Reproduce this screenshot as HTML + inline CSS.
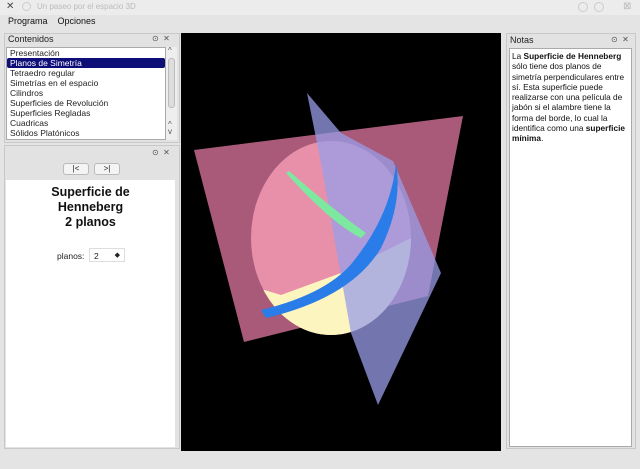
<!DOCTYPE html>
<html><head><meta charset="utf-8"><style>
*{margin:0;padding:0;box-sizing:border-box}
body{width:640px;height:469px;background:#e4e4e4;font-family:"Liberation Sans",sans-serif;font-size:9px;color:#222;position:relative;overflow:hidden}
.abs{position:absolute}
.title{left:0;top:0;width:640px;height:15px;background:#ececec;color:#bbb;font-size:8px}
.menu{top:16px;left:8px;font-size:9px;color:#111}
.panel{border:1px solid #c8c8c8;background:#e2e2e2}
.list{background:#fff;border:1px solid #aaa}
.item{height:10px;line-height:10px;padding-left:3px;font-size:8.5px;color:#222}
.sel{background:#0e0e78;color:#fff;border-radius:2px}
.btn{background:#f4f4f4;border:1px solid #bbb;border-radius:3px;width:26px;height:12px;text-align:center;line-height:10px;font-size:8px}
.ic{font-size:8px;color:#555}
</style></head><body>
<div class="abs title"><span class="abs" style="left:6px;top:1px;color:#444;font-size:10px">✕</span><span class="abs" style="left:22px;top:2px;width:9px;height:9px;border:1px solid #ccc;border-radius:50%"></span><span class="abs" style="left:37px;top:2px">Un paseo por el espacio 3D</span>
<span class="abs" style="left:578px;top:2px;width:10px;height:10px;border:1px solid #ccc;border-radius:50%"></span><span class="abs" style="left:594px;top:2px;width:10px;height:10px;border:1px solid #ccc;border-radius:50%"></span><span class="abs" style="left:623px;top:1px;color:#bbb;font-size:10px">⊠</span></div>
<div class="abs menu">Programa&nbsp;&nbsp;&nbsp;&nbsp;Opciones</div>

<div class="abs panel" style="left:4px;top:33px;width:176px;height:110px"></div>
<div class="abs" style="left:8px;top:34px;font-size:9px">Contenidos</div>
<div class="abs ic" style="left:152px;top:34px">⊙&nbsp;&nbsp;✕</div>
<div class="abs list" style="left:6px;top:47px;width:160px;height:93px;padding-top:0">
<div class="item">Presentación</div><div class="item sel">Planos de Simetría</div><div class="item">Tetraedro regular</div><div class="item">Simetrías en el espacio</div><div class="item">Cilindros</div><div class="item">Superficies de Revolución</div><div class="item">Superficies Regladas</div><div class="item">Cuadricas</div><div class="item">Sólidos Platónicos</div></div>
<div class="abs" style="left:166px;top:47px;width:11px;height:93px;background:#eee"><div class="abs" style="left:2px;top:11px;width:7px;height:50px;background:#ddd;border:1px solid #bbb;border-radius:3px"></div><div class="abs ic" style="left:2px;top:-1px">^</div><div class="abs ic" style="left:2px;top:74px;line-height:7px">^<br>v</div></div>

<div class="abs panel" style="left:4px;top:145px;width:176px;height:304px"></div>
<div class="abs ic" style="left:152px;top:148px">⊙&nbsp;&nbsp;✕</div>
<div class="abs btn" style="left:63px;top:163px">|&lt;</div>
<div class="abs btn" style="left:94px;top:163px">&gt;|</div>
<div class="abs" style="left:6px;top:180px;width:169px;height:267px;background:#fff"></div>
<div class="abs" style="left:6px;top:185px;width:169px;text-align:center;font-weight:bold;font-size:12.5px;line-height:15px;color:#111">Superficie de<br>Henneberg<br>2 planos</div>
<div class="abs" style="left:57px;top:251px;font-size:8.5px">planos:</div>
<div class="abs" style="left:89px;top:248px;width:36px;height:14px;border:1px solid #ddd;background:#fff;font-size:8.5px;padding:2px 4px">2 <span style="float:right;font-size:7px">◆</span></div>

<svg class="abs" style="left:181px;top:33px" width="320" height="418" viewBox="0 0 320 418">
<rect width="320" height="418" fill="#000"/>
<polygon points="13,117 282,83 247,263 63,309" fill="#a85a78"/>
<clipPath id="c"><ellipse cx="150" cy="205" rx="80" ry="97"/></clipPath>
<g clip-path="url(#c)">
<rect x="60" y="100" width="190" height="210" fill="#e890aa"/>
<polygon points="60,250 100,262 160,240 240,200 250,310 60,310" fill="#fdf5c0"/>
</g>
<polygon points="126,60 160,100 212,128 260,240 197,372 170,300 140,130" fill="#9a9ee8" opacity="0.75"/>
<path d="M105,140 Q150,190 180,205 L185,200 Q150,175 108,138Z" fill="#7de8a0"/>
<path d="M80,277 Q150,260 175,225 Q210,180 215,130 Q222,170 200,215 Q170,265 85,285Z" fill="#2a7de8"/>
</svg>

<div class="abs panel" style="left:506px;top:33px;width:130px;height:416px"></div>
<div class="abs" style="left:510px;top:35px;font-size:9px">Notas</div>
<div class="abs ic" style="left:611px;top:35px">⊙&nbsp;&nbsp;✕</div>
<div class="abs" style="left:509px;top:48px;width:123px;height:399px;background:#fff;border:1px solid #aaa;padding:2px 2px;font-size:8.3px;line-height:10.3px;color:#111">La <b>Superficie de Henneberg</b> sólo tiene dos planos de simetría perpendiculares entre sí. Esta superficie puede realizarse con una película de jabón si el alambre tiene la forma del borde, lo cual la identifica como una <b>superficie mínima</b>.</div>
</body></html>
